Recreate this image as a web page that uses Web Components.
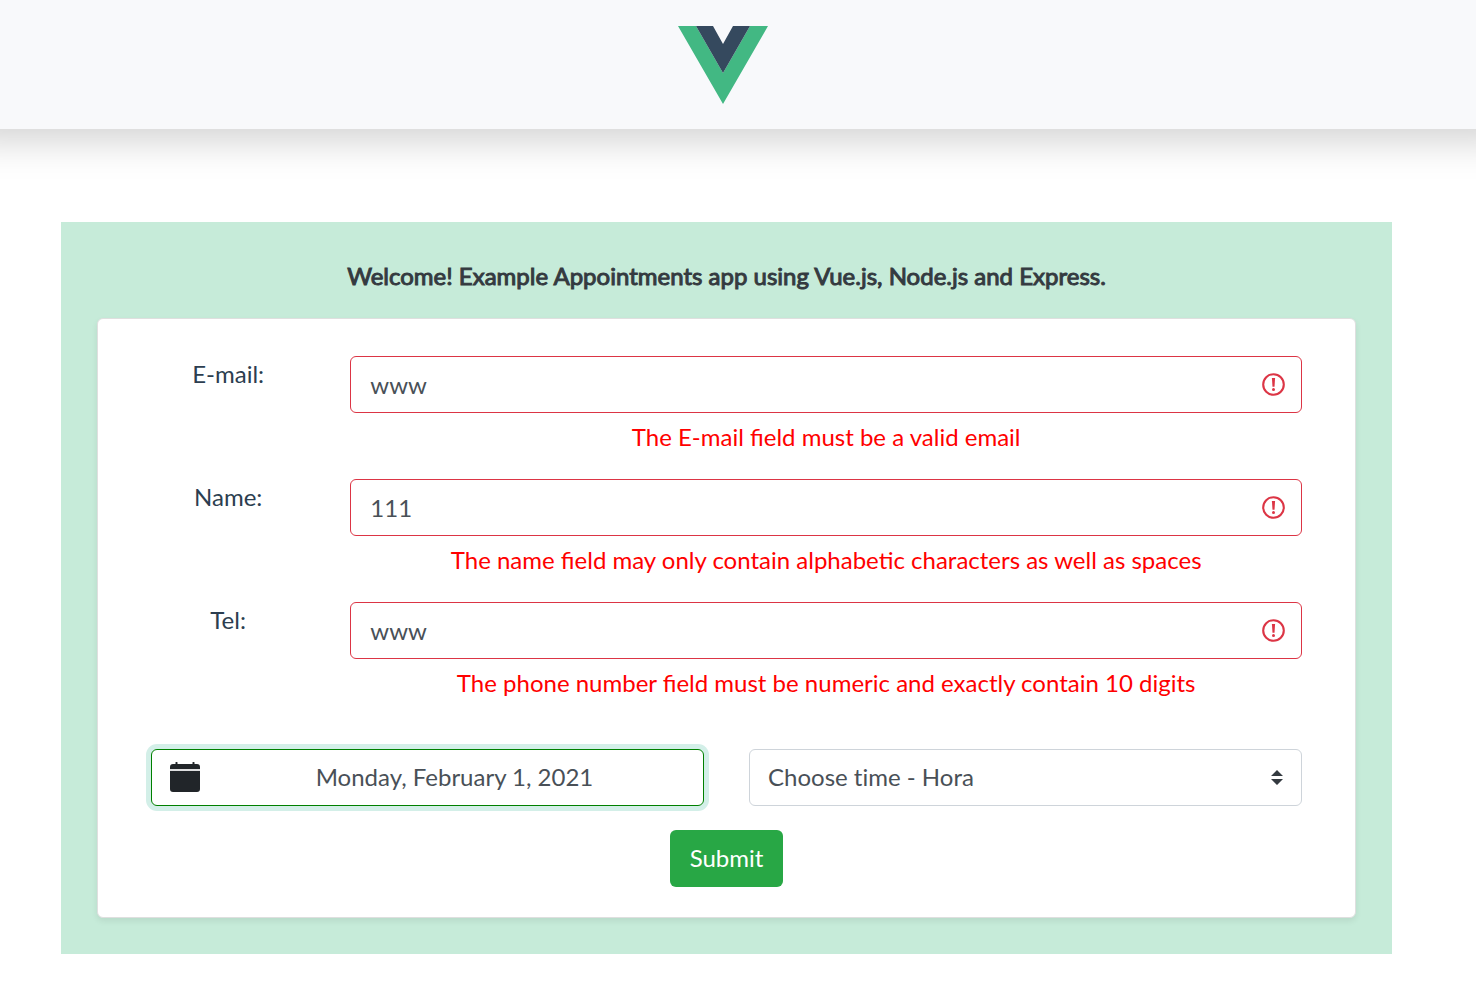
<!DOCTYPE html>
<html lang="en">
<head>
<meta charset="utf-8">
<meta name="viewport" content="width=device-width, initial-scale=1">
<title>Appointments</title>
<style>
  body {
    margin: 0;
    background: #fff;
    color: #2c3e50;
    font: 24px/36px Lato, "Liberation Sans", sans-serif;
    font-variant-ligatures: no-common-ligatures;
  }
</style>
</head>
<body>
<appointment-app></appointment-app>

<template id="app-tpl">
  <style>
    :host { display: block; }
    main { padding: 93px 84px 30px 61px; }
  </style>
  <site-header></site-header>
  <main>
    <welcome-panel heading="Welcome! Example Appointments app using Vue.js, Node.js and Express.">
      <appointment-form></appointment-form>
    </welcome-panel>
  </main>
</template>

<template id="header-tpl">
  <style>
    :host { display: block; }
    header {
      display: flex;
      justify-content: center;
      box-sizing: border-box;
      height: 129px;
      padding: 26px 30px 0 0;
      background: #f8f9fb;
      box-shadow: 0 -24px 36px 36px rgba(0, 0, 0, .176);
    }
    svg { display: block; width: 90px; height: 78px; }
  </style>
  <header>
    <svg viewBox="0 0 90 78" role="img" aria-label="Vue">
      <path fill="#42b883" d="M0 0H18L45 47 72 0H90L45 78Z"/>
      <path fill="#35495e" d="M18 0H35L45 18 55 0H72L45 47Z"/>
    </svg>
  </header>
</template>

<template id="panel-tpl">
  <style>
    :host { display: block; padding: 36px; background: #c6ebd9; }
    h1 {
      margin: 0 0 24px;
      color: #343a40;
      font-size: 24px;
      line-height: 36px;
      font-weight: 400;
      -webkit-text-stroke: 1px #343a40;
      text-align: center;
    }
    section {
      padding: 37px 53px 30px;
      border: 1px solid #dfdfdf;
      border-radius: 6px;
      background: #fff;
      box-shadow: 0 3px 6px rgba(0, 0, 0, .075);
    }
  </style>
  <h1></h1>
  <section><slot></slot></section>
</template>

<template id="form-tpl">
  <style>
    :host { display: block; }
    form { display: grid; gap: 24px; }
    .fields { display: grid; gap: 24px; padding-bottom: 24px; margin: 0; }
    .pickers { display: grid; grid-template-columns: 1fr 1fr; gap: 45px; margin: 0; }
    button {
      justify-self: center;
      height: 57px;
      padding: 0 20px 2px;
      border: 0;
      border-radius: 6px;
      background: #28a745;
      color: #fff;
      font: inherit;
    }
  </style>
  <form novalidate>
    <div class="fields">
      <form-field label="E-mail:" type="email" value="www" error="The E-mail field must be a valid email"></form-field>
      <form-field label="Name:" type="text" value="111" error="The name field may only contain alphabetic characters as well as spaces"></form-field>
      <form-field label="Tel:" type="tel" value="www" error="The phone number field must be numeric and exactly contain 10 digits"></form-field>
    </div>
    <div class="pickers">
      <date-picker>Monday, February 1, 2021</date-picker>
      <time-select placeholder="Choose time - Hora"></time-select>
    </div>
    <button type="submit">Submit</button>
  </form>
</template>

<template id="field-tpl">
  <style>
    :host { display: grid; grid-template-columns: repeat(12, 1fr); column-gap: 45px; }
    label { grid-column: span 2; text-align: center; }
    .control { grid-column: span 10; }
    .box { display: grid; align-items: center; }
    input {
      grid-area: 1 / 1;
      box-sizing: border-box;
      width: 100%;
      height: 57px;
      margin: 0;
      padding: 0 54px 0 19px;
      border: 1px solid #dc3545;
      border-radius: 6px;
      outline: 0;
      background: #fff;
      color: #495057;
      font: inherit;
    }
    svg { grid-area: 1 / 1; justify-self: end; width: 23px; height: 23px; margin-right: 17px; }
    p { margin: 6px 0 0; color: #f00; text-align: center; font-variant-ligatures: normal; }
  </style>
  <label for="control"></label>
  <div class="control">
    <div class="box">
      <input id="control" aria-invalid="true" aria-describedby="error">
      <svg viewBox="0 0 23 23" aria-hidden="true">
        <circle cx="11.5" cy="11.5" r="10.3" fill="none" stroke="#dc3545" stroke-width="2.1"/>
        <path fill="#dc3545" d="M9.900 5h3.200L12.500 13.800h-2Z"/>
        <circle cx="11.5" cy="16.500" r="1.500" fill="#dc3545"/>
      </svg>
    </div>
    <p id="error"></p>
  </div>
</template>

<template id="date-tpl">
  <style>
    :host { display: block; }
    button {
      display: flex;
      align-items: center;
      box-sizing: border-box;
      width: 100%;
      height: 57px;
      padding: 0 18px 2px;
      border: 1px solid green;
      border-radius: 6px;
      background: #fff;
      box-shadow: 0 0 0 5px #d3efe8;
      color: #495057;
      font: inherit;
    }
    svg { flex: none; width: 30px; height: 30px; color: #212529; }
    span { flex: 1; padding-left: 24px; text-align: center; }
  </style>
  <button type="button" aria-haspopup="dialog">
    <svg viewBox="0 0 30 30" fill="currentColor" aria-hidden="true">
      <path d="M0 7V5Q0 2 3 2H5.500V.8a1 1 0 0 1 2 0V2h15V.8a1 1 0 0 1 2 0V2H27q3 0 3 3v2Z"/>
      <path d="M0 9H30V27q0 3-3 3H3q-3 0-3-3Z"/>
      <path opacity=".3" d="M0 7.500H30V8.500H0Z"/>
    </svg>
    <span><slot></slot></span>
  </button>
</template>

<template id="time-tpl">
  <style>
    :host { display: grid; align-items: center; }
    select {
      grid-area: 1 / 1;
      appearance: none;
      box-sizing: border-box;
      width: 100%;
      height: 57px;
      margin: 0;
      padding: 0 42px 2px 18px;
      border: 1px solid #ced4da;
      border-radius: 6px;
      background: #fff;
      color: #495057;
      font: inherit;
    }
    svg { grid-area: 1 / 1; justify-self: end; width: 12px; height: 15px; margin-right: 19px; pointer-events: none; }
  </style>
  <select aria-label="Time"><option></option></select>
  <svg viewBox="0 0 12 15" aria-hidden="true"><path fill="#343a40" d="M6 0 12 6H0ZM0 9H12L6 15Z"/></svg>
</template>

<script>
  class TemplateElement extends HTMLElement {
    connectedCallback() {
      if (this.shadowRoot) return;
      const root = this.attachShadow({ mode: "open" });
      root.append(document.getElementById(this.constructor.template).content.cloneNode(true));
      this.fill(root);
    }
    fill() {}
  }

  class AppointmentApp extends TemplateElement { static template = "app-tpl"; }
  class SiteHeader extends TemplateElement { static template = "header-tpl"; }
  class DatePicker extends TemplateElement { static template = "date-tpl"; }

  class WelcomePanel extends TemplateElement {
    static template = "panel-tpl";
    fill(root) { root.querySelector("h1").textContent = this.getAttribute("heading"); }
  }

  class AppointmentForm extends TemplateElement {
    static template = "form-tpl";
    fill(root) { root.querySelector("form").addEventListener("submit", e => e.preventDefault()); }
  }

  class FormField extends TemplateElement {
    static template = "field-tpl";
    fill(root) {
      const input = root.querySelector("input");
      input.type = this.getAttribute("type");
      input.value = this.getAttribute("value");
      root.querySelector("label").textContent = this.getAttribute("label");
      root.querySelector("p").textContent = this.getAttribute("error");
    }
  }

  class TimeSelect extends TemplateElement {
    static template = "time-tpl";
    fill(root) { root.querySelector("option").textContent = this.getAttribute("placeholder"); }
  }

  customElements.define("site-header", SiteHeader);
  customElements.define("welcome-panel", WelcomePanel);
  customElements.define("form-field", FormField);
  customElements.define("date-picker", DatePicker);
  customElements.define("time-select", TimeSelect);
  customElements.define("appointment-form", AppointmentForm);
  customElements.define("appointment-app", AppointmentApp);
</script>
</body>
</html>
